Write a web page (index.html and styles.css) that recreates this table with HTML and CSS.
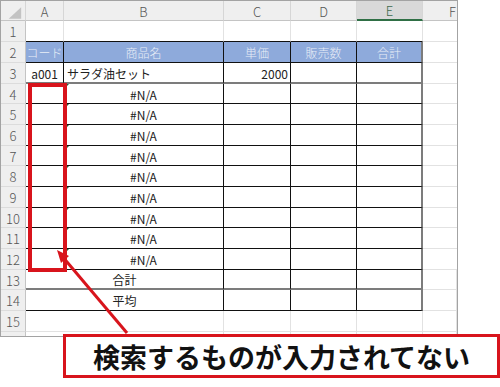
FILE: index.html
```html
<!DOCTYPE html>
<html lang="ja">
<head>
<meta charset="utf-8">
<link rel="stylesheet" href="styles.css">
</head>
<body>
<div class="page">
  <div class="frame">
    <div class="sheet">
      <!-- column headers -->
      <div class="ch corner"><svg width="25" height="20" viewBox="0 0 25 20"><polygon points="21,6 21,18 8,18" fill="#c3c3c3"/></svg></div>
      <div class="ch">A</div>
      <div class="ch">B</div>
      <div class="ch">C</div>
      <div class="ch">D</div>
      <div class="ch sel">E</div>
      <div class="ch fcol">F</div>

      <!-- row 1 -->
      <div class="rh r21">1</div>
      <div class="c tt"></div><div class="c tt"></div><div class="c tt"></div><div class="c tt"></div><div class="c tt"></div><div class="c"></div>

      <!-- row 2 -->
      <div class="rh r21">2</div>
      <div class="c t hd">コード</div>
      <div class="c t hd">商品名</div>
      <div class="c t hd">単価</div>
      <div class="c t hd">販売数</div>
      <div class="c t hd te">合計</div>
      <div class="c"></div>

      <!-- row 3 -->
      <div class="rh r21">3</div>
      <div class="c t tg ctr">a001</div>
      <div class="c t tg lft">サラダ油セット</div>
      <div class="c t tg rgt">2000</div>
      <div class="c t tg"></div>
      <div class="c t tg te"></div>
      <div class="c"></div>

      <!-- rows 4-12 -->
      <div class="rh">4</div>
      <div class="c t"></div><div class="c t ctr err">#N/A</div><div class="c t"></div><div class="c t"></div><div class="c t te"></div><div class="c"></div>
      <div class="rh">5</div>
      <div class="c t"></div><div class="c t ctr err">#N/A</div><div class="c t"></div><div class="c t"></div><div class="c t te"></div><div class="c"></div>
      <div class="rh">6</div>
      <div class="c t"></div><div class="c t ctr err">#N/A</div><div class="c t"></div><div class="c t"></div><div class="c t te"></div><div class="c"></div>
      <div class="rh">7</div>
      <div class="c t"></div><div class="c t ctr err">#N/A</div><div class="c t"></div><div class="c t"></div><div class="c t te"></div><div class="c"></div>
      <div class="rh">8</div>
      <div class="c t"></div><div class="c t ctr err">#N/A</div><div class="c t"></div><div class="c t"></div><div class="c t te"></div><div class="c"></div>
      <div class="rh">9</div>
      <div class="c t"></div><div class="c t ctr err">#N/A</div><div class="c t"></div><div class="c t"></div><div class="c t te"></div><div class="c"></div>
      <div class="rh">10</div>
      <div class="c t"></div><div class="c t ctr err">#N/A</div><div class="c t"></div><div class="c t"></div><div class="c t te"></div><div class="c"></div>
      <div class="rh">11</div>
      <div class="c t"></div><div class="c t ctr err">#N/A</div><div class="c t"></div><div class="c t"></div><div class="c t te"></div><div class="c"></div>
      <div class="rh">12</div>
      <div class="c t"></div><div class="c t ctr err">#N/A</div><div class="c t"></div><div class="c t"></div><div class="c t te"></div><div class="c"></div>

      <!-- row 13 -->
      <div class="rh">13</div>
      <div class="c t tg ctr span2">合計</div>
      <div class="c t tg"></div>
      <div class="c t tg"></div>
      <div class="c t tg te"></div>
      <div class="c"></div>

      <!-- row 14 -->
      <div class="rh">14</div>
      <div class="c t ctr span2">平均</div>
      <div class="c t"></div>
      <div class="c t"></div>
      <div class="c t te"></div>
      <div class="c"></div>

      <!-- row 15 -->
      <div class="rh">15</div>
      <div class="c"></div><div class="c"></div><div class="c"></div><div class="c"></div><div class="c"></div><div class="c"></div>

      <!-- partial row -->
      <div class="rh part"></div>
      <div class="c part"></div><div class="c part"></div><div class="c part"></div><div class="c part"></div><div class="c part"></div><div class="c part"></div>
    </div>
  </div>

  <div class="highlight"></div>

  <svg class="arrow" width="500" height="387" viewBox="0 0 500 387">
    <line x1="127" y1="333" x2="64.5" y2="259" stroke="#d8141c" stroke-width="3"/>
    <polygon points="57,250 69,256 61,263" fill="#d8141c"/>
  </svg>

  <div class="callout">検索するものが入力されてない</div>
</div>
</body>
</html>
```

FILE: styles.css
```css
* { box-sizing: border-box; }

html, body {
  margin: 0;
  padding: 0;
  background: #ffffff;
}

.page {
  position: relative;
  width: 500px;
  height: 387px;
  overflow: hidden;
  font-family: "Noto Sans CJK JP", "Noto Sans", sans-serif;
}

.frame {
  width: 458px;
  border: 1px solid #a3a3a3;
  background: #ffffff;
}

.sheet {
  display: grid;
  grid-template-columns: 25px 38px 160px 67px 66px 66px 34px;
  grid-template-rows: 20px 21px 21px 21px 20px 21px 21px 20px 21px 21px 20px 21px 21px 20px 21px 21px 4px;
  overflow: hidden;
}

/* column headers */
.ch {
  display: flex;
  align-items: center;
  justify-content: center;
  background: #efefef;
  border-right: 1px solid #d6d6d6;
  border-bottom: 1px solid #c4c4c4;
  color: #555555;
  font-size: 13px;
  font-weight: 300;
  padding-top: 1px;
}
.ch.corner { padding: 0; }
.ch.corner svg { display: block; }
.ch.sel {
  background: #d9d9d9;
  border-bottom: 2px solid #2f6f45;
  color: #3d6a4c;
}
.ch.fcol {
  justify-content: flex-end;
  padding-right: 1px;
  border-right: none;
}

/* row headers */
.rh {
  display: flex;
  align-items: center;
  justify-content: center;
  background: #efefef;
  border-right: 1px solid #c4c4c4;
  border-bottom: 1px solid #dcdcdc;
  color: #555555;
  font-size: 13px;
  font-weight: 300;
  padding-top: 1px;
}
.rh.part { border-bottom: none; }

/* cells */
.c {
  display: flex;
  align-items: center;
  border-right: 1px solid #e2e2e2;
  border-bottom: 1px solid #e2e2e2;
  font-size: 12px;
  color: #222222;
  white-space: nowrap;
  padding-top: 1px;
}
.c.part { border-bottom: none; }
.sheet > .c:nth-child(7n) { border-right: none; }

.c.tt { border-bottom-color: #111111; }

.c.t {
  border-right-color: #111111;
  border-bottom-color: #111111;
}
.c.tg {
  border-bottom: 2px solid #7c7c7c;
}
.c.te {
  border-right: 2px solid #7c7c7c;
}

.c.hd {
  background: #8eaadb;
  color: #e9eef7;
  justify-content: center;
  font-weight: 300;
}

.ctr { justify-content: center; }
.lft { justify-content: flex-start; padding-left: 3px; }
.rgt { justify-content: flex-end; padding-right: 2px; }

.span2 { grid-column: span 2; }

.err { position: relative; }
.err::before {
  content: "";
  position: absolute;
  left: 1px;
  top: 0;
  border-top: 4px solid #1f5f34;
  border-right: 4px solid transparent;
}

/* overlays */
.highlight {
  position: absolute;
  left: 28px;
  top: 83px;
  width: 39px;
  height: 189px;
  border: 4px solid #d8141c;
}

.arrow {
  position: absolute;
  left: 0;
  top: 0;
  pointer-events: none;
}

.callout {
  position: absolute;
  left: 63px;
  top: 334px;
  width: 437px;
  height: 44px;
  border: 3px solid #d8141c;
  background: #ffffff;
  display: flex;
  align-items: center;
  justify-content: center;
  font-size: 27px;
  font-weight: 700;
  color: #111111;
  letter-spacing: 0;
  padding-top: 1px;
}
```
